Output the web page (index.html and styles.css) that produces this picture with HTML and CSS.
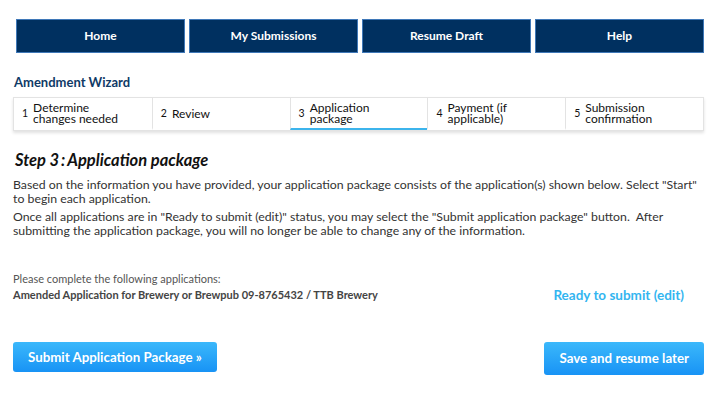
FILE: index.html
```html
<!DOCTYPE html>
<html lang="en">
<head>
    <meta charset="UTF-8">
    <title>Amendment Wizard</title>
    <link rel="stylesheet" href="styles.css">
</head>
<body>
    <div class="page">
        <nav class="topnav">
            <a href="#">Home</a>
            <a href="#">My Submissions</a>
            <a href="#">Resume Draft</a>
            <a href="#">Help</a>
        </nav>

        <h3 class="wizard-title">Amendment Wizard</h3>
        <ol class="steps">
            <li><span class="num">1</span><span class="label">Determine changes needed</span></li>
            <li><span class="num">2</span><span class="label">Review</span></li>
            <li class="active"><span class="num">3</span><span class="label">Application package</span></li>
            <li><span class="num">4</span><span class="label">Payment (if applicable)</span></li>
            <li><span class="num">5</span><span class="label">Submission confirmation</span></li>
        </ol>

        <h2 class="step-heading">Step 3&thinsp;:&thinsp;Application package</h2>
        <p class="intro">Based on the information you have provided, your application package consists of the application(s) shown below. Select "Start" to begin each application.</p>
        <p class="intro">Once all applications are in "Ready to submit (edit)" status, you may select the "Submit application package" button.&nbsp; After submitting the application package, you will no longer be able to change any of the information.</p>

        <div class="apps">
            <div class="apps-text">
                <p class="apps-note">Please complete the following applications:</p>
                <p class="apps-name">Amended Application for Brewery or Brewpub 09-8765432 / TTB Brewery</p>
            </div>
            <a href="#" class="status">Ready to submit (edit)</a>
        </div>

        <div class="actions">
            <button class="btn btn-submit">Submit Application Package &raquo;</button>
            <button class="btn btn-save">Save and resume later</button>
        </div>
    </div>
</body>
</html>
```

FILE: styles.css
```css
body {
    margin: 0;
    background: #ffffff;
    font-family: 'Lato', 'Open Sans', sans-serif;
    color: #333333;
}
.page {
    padding: 19px 11px 0 13px;
}
.topnav {
    display: grid;
    grid-template-columns: repeat(4, 1fr);
    gap: 4px;
    padding-left: 3px;
}
.topnav a {
    display: block;
    height: 32px;
    line-height: 32px;
    background: #003060;
    border: 1px solid #3f78b8;
    color: #ffffff;
    text-align: center;
    font-size: 12px;
    font-weight: bold;
    text-decoration: none;
}
.wizard-title {
    margin: 21px 0 7px 1px;
    font-size: 13px;
    font-weight: bold;
    color: #0f3a66;
}
.steps {
    display: grid;
    grid-template-columns: repeat(5, 1fr);
    margin: 0;
    padding: 0;
    list-style: none;
    border: 1px solid #e3e3e3;
    box-shadow: 0 2px 3px rgba(0, 0, 0, 0.12);
}
.steps li {
    display: flex;
    align-items: center;
    height: 30px;
    padding: 0 8px;
    border-left: 1px solid #e3e3e3;
    border-bottom: 2px solid transparent;
    font-size: 12px;
    line-height: 11px;
    color: #111111;
}
.steps li:first-child {
    border-left: none;
}
.steps li.active {
    border-bottom-color: #3cb4ec;
}
.steps .num {
    margin-right: 5px;
    font-size: 10.5px;
}
.steps .label {
    max-width: 88px;
}
.step-heading {
    margin: 19px 0 8px 2px;
    font-size: 16.5px;
    font-style: italic;
    font-weight: bold;
    color: #111111;
}
.intro {
    margin: 0 0 5px 0;
    font-size: 12.3px;
    line-height: 13.7px;
    color: #333333;
}
.apps {
    display: flex;
    align-items: flex-end;
    margin-top: 34px;
}
.apps-text {
    flex: 1;
}
.apps-note {
    margin: 0 0 3px 0;
    font-size: 11px;
    color: #555555;
}
.apps-name {
    margin: 0;
    font-size: 11px;
    font-weight: bold;
    color: #444444;
}
.status {
    margin: 0 20px -2px 0;
    font-size: 13.5px;
    font-weight: bold;
    color: #33b5f0;
    text-decoration: none;
}
.actions {
    display: flex;
    justify-content: space-between;
    margin-top: 41px;
}
.btn {
    height: 30px;
    padding: 0 15px;
    border: none;
    border-radius: 3px;
    background: linear-gradient(#3bb8fb, #1893f5);
    color: #ffffff;
    font-family: inherit;
    font-size: 13.3px;
    font-weight: bold;
}
.btn-save {
    height: 33px;
}
```
